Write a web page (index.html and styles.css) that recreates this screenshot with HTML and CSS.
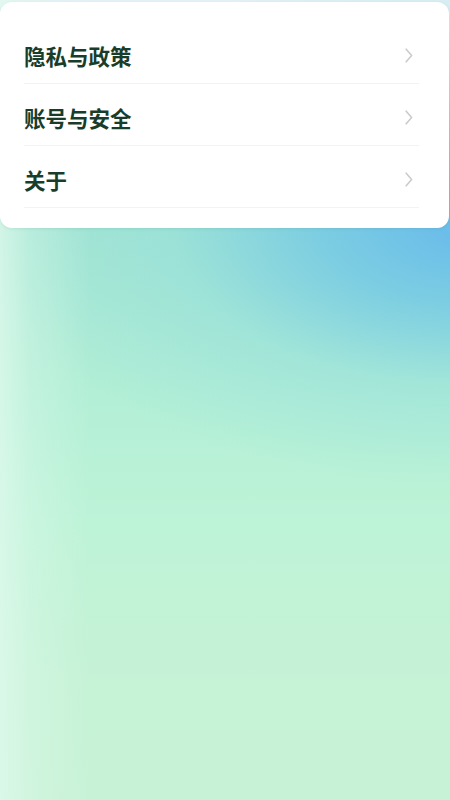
FILE: index.html
```html
<!DOCTYPE html>
<html lang="zh-CN">
<head>
<meta charset="utf-8">
<title>设置</title>
<link rel="stylesheet" href="styles.css">
</head>
<body>
<div class="page">
  <div class="card">
    <div class="row">
      <span class="label">隐私与政策</span>
      <svg class="chev" width="8" height="15" viewBox="0 0 8 15"><path d="M1.2 1.2 L6.6 7.5 L1.2 13.8" fill="none" stroke="#cbcbcb" stroke-width="1.6" stroke-linecap="round" stroke-linejoin="round"/></svg>
    </div>
    <div class="row">
      <span class="label">账号与安全</span>
      <svg class="chev" width="8" height="15" viewBox="0 0 8 15"><path d="M1.2 1.2 L6.6 7.5 L1.2 13.8" fill="none" stroke="#cbcbcb" stroke-width="1.6" stroke-linecap="round" stroke-linejoin="round"/></svg>
    </div>
    <div class="row">
      <span class="label">关于</span>
      <svg class="chev" width="8" height="15" viewBox="0 0 8 15"><path d="M1.2 1.2 L6.6 7.5 L1.2 13.8" fill="none" stroke="#cbcbcb" stroke-width="1.6" stroke-linecap="round" stroke-linejoin="round"/></svg>
    </div>
  </div>
</div>
</body>
</html>
```
FILE: styles.css
```css
html, body {
  margin: 0;
  padding: 0;
}
body {
  width: 450px;
  height: 800px;
  overflow: hidden;
  font-family: "Noto Sans CJK SC", "Noto Sans", sans-serif;
}
.page {
  height: 800px;
  box-sizing: border-box;
  padding-top: 2px;
  background:
    linear-gradient(to right, rgba(225, 250, 238, 0.75) 0px, rgba(225, 250, 238, 0.35) 30px, rgba(225, 250, 238, 0) 90px),
    radial-gradient(ellipse 480px 260px at 470px 225px, rgba(104, 186, 236, 1) 0%, rgba(112, 198, 230, 0.8) 30%, rgba(140, 218, 222, 0.4) 62%, rgba(170, 235, 215, 0) 100%),
    linear-gradient(to bottom, #e4f1f6 0px, #e4f1f6 4px, #a5e6d2 230px, #b3efd6 400px, #bdf3d7 520px, #c6f2d6 680px, #c8f2d6 800px);
}
.card {
  background: #ffffff;
  border-radius: 12px;
  margin-right: 1px;
  padding: 20px 0 20px 0;
  box-shadow: 0 1px 3px rgba(60, 120, 110, 0.12);
}
.row {
  display: flex;
  align-items: center;
  justify-content: space-between;
  height: 62px;
  box-sizing: border-box;
  padding-top: 6px;
  margin: 0 30px 0 24px;
  border-bottom: 1px solid #f2f3f3;
}
.label {
  font-size: 21.5px;
  font-weight: 700;
  color: #183d2b;
  letter-spacing: 0;
}
.chev {
  margin-right: 6px;
  display: block;
}
```
